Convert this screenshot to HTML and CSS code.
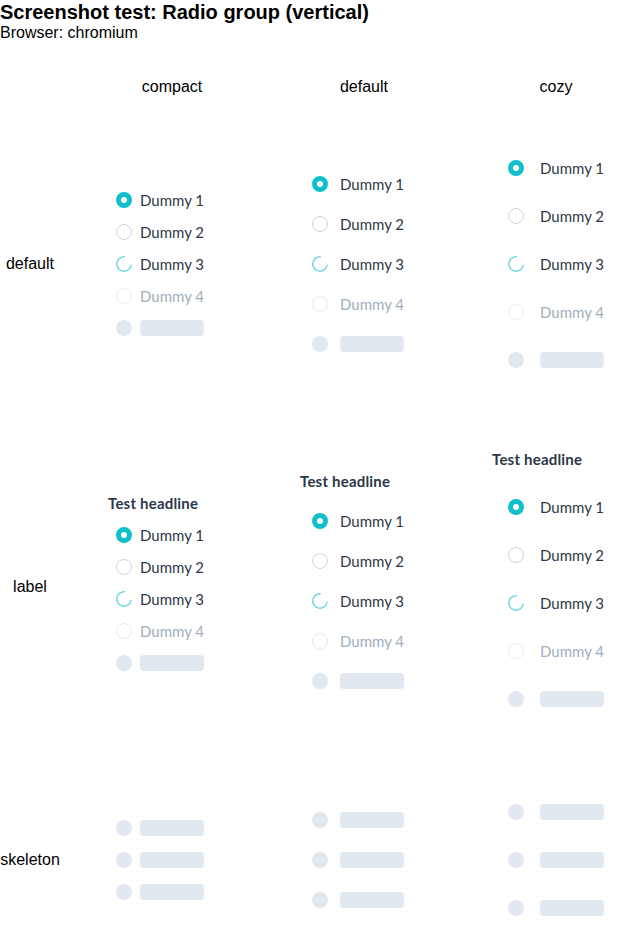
FILE: index.html
```html
<!DOCTYPE html>
<html>
<head>
<meta charset="utf-8">
<link rel="stylesheet" href="styles.css">
</head>
<body>
<h1 class="title">Screenshot test: Radio group (vertical)</h1>
<p class="subtitle">Browser: chromium</p>
<div class="matrix">
  <div class="corner"></div>
  <div class="col-head">compact</div>
  <div class="col-head">default</div>
  <div class="col-head">cozy</div>

  <div class="row-head">default</div>
  <div class="cell"><div class="group compact">
    <div class="item"><span class="radio checked"></span><span class="text">Dummy 1</span></div>
    <div class="item"><span class="radio"></span><span class="text">Dummy 2</span></div>
    <div class="item"><svg class="spinner" viewBox="0 0 16 16"><circle cx="8" cy="8" r="7.25"/></svg><span class="text">Dummy 3</span></div>
    <div class="item disabled"><span class="radio"></span><span class="text">Dummy 4</span></div>
    <div class="item"><span class="skel-dot"></span><span class="skel-bar"></span></div>
  </div></div>
  <div class="cell"><div class="group normal">
    <div class="item"><span class="radio checked"></span><span class="text">Dummy 1</span></div>
    <div class="item"><span class="radio"></span><span class="text">Dummy 2</span></div>
    <div class="item"><svg class="spinner" viewBox="0 0 16 16"><circle cx="8" cy="8" r="7.25"/></svg><span class="text">Dummy 3</span></div>
    <div class="item disabled"><span class="radio"></span><span class="text">Dummy 4</span></div>
    <div class="item"><span class="skel-dot"></span><span class="skel-bar"></span></div>
  </div></div>
  <div class="cell"><div class="group cozy">
    <div class="item"><span class="radio checked"></span><span class="text">Dummy 1</span></div>
    <div class="item"><span class="radio"></span><span class="text">Dummy 2</span></div>
    <div class="item"><svg class="spinner" viewBox="0 0 16 16"><circle cx="8" cy="8" r="7.25"/></svg><span class="text">Dummy 3</span></div>
    <div class="item disabled"><span class="radio"></span><span class="text">Dummy 4</span></div>
    <div class="item"><span class="skel-dot"></span><span class="skel-bar"></span></div>
  </div></div>

  <div class="row-head">label</div>
  <div class="cell"><div class="group compact">
    <div class="headline">Test headline</div>
    <div class="item"><span class="radio checked"></span><span class="text">Dummy 1</span></div>
    <div class="item"><span class="radio"></span><span class="text">Dummy 2</span></div>
    <div class="item"><svg class="spinner" viewBox="0 0 16 16"><circle cx="8" cy="8" r="7.25"/></svg><span class="text">Dummy 3</span></div>
    <div class="item disabled"><span class="radio"></span><span class="text">Dummy 4</span></div>
    <div class="item"><span class="skel-dot"></span><span class="skel-bar"></span></div>
  </div></div>
  <div class="cell"><div class="group normal">
    <div class="headline">Test headline</div>
    <div class="item"><span class="radio checked"></span><span class="text">Dummy 1</span></div>
    <div class="item"><span class="radio"></span><span class="text">Dummy 2</span></div>
    <div class="item"><svg class="spinner" viewBox="0 0 16 16"><circle cx="8" cy="8" r="7.25"/></svg><span class="text">Dummy 3</span></div>
    <div class="item disabled"><span class="radio"></span><span class="text">Dummy 4</span></div>
    <div class="item"><span class="skel-dot"></span><span class="skel-bar"></span></div>
  </div></div>
  <div class="cell"><div class="group cozy">
    <div class="headline">Test headline</div>
    <div class="item"><span class="radio checked"></span><span class="text">Dummy 1</span></div>
    <div class="item"><span class="radio"></span><span class="text">Dummy 2</span></div>
    <div class="item"><svg class="spinner" viewBox="0 0 16 16"><circle cx="8" cy="8" r="7.25"/></svg><span class="text">Dummy 3</span></div>
    <div class="item disabled"><span class="radio"></span><span class="text">Dummy 4</span></div>
    <div class="item"><span class="skel-dot"></span><span class="skel-bar"></span></div>
  </div></div>

  <div class="row-head">skeleton</div>
  <div class="cell"><div class="group compact">
    <div class="item"><span class="skel-dot"></span><span class="skel-bar"></span></div>
    <div class="item"><span class="skel-dot"></span><span class="skel-bar"></span></div>
    <div class="item"><span class="skel-dot"></span><span class="skel-bar"></span></div>
  </div></div>
  <div class="cell"><div class="group normal">
    <div class="item"><span class="skel-dot"></span><span class="skel-bar"></span></div>
    <div class="item"><span class="skel-dot"></span><span class="skel-bar"></span></div>
    <div class="item"><span class="skel-dot"></span><span class="skel-bar"></span></div>
  </div></div>
  <div class="cell"><div class="group cozy">
    <div class="item"><span class="skel-dot"></span><span class="skel-bar"></span></div>
    <div class="item"><span class="skel-dot"></span><span class="skel-bar"></span></div>
    <div class="item"><span class="skel-dot"></span><span class="skel-bar"></span></div>
  </div></div>
</div>
</body>
</html>
```
FILE: styles.css
```css
html, body {
  margin: 0;
  padding: 0;
  background: #ffffff;
}
body {
  font-family: "Liberation Sans", Arial, sans-serif;
  color: #000000;
}
.title {
  margin: 0;
  font-size: 20px;
  line-height: 24px;
  font-weight: bold;
}
.subtitle {
  margin: 0;
  font-size: 16px;
  line-height: 18px;
}
.matrix {
  width: 636px;
  overflow: hidden;
  display: grid;
  grid-template-columns: 76px 192px 192px 192px;
  grid-template-rows: 90px 263px 384px 162px;
  align-items: center;
}
.col-head {
  text-align: center;
  font-size: 16px;
  line-height: 18px;
}
.row-head {
  width: 60px;
  text-align: center;
  font-size: 16px;
  line-height: 18px;
}
.cell {
  display: flex;
  justify-content: center;
}
.group {
  width: 128px;
  display: flex;
  flex-direction: column;
  font-family: Lato, "Noto Sans", sans-serif;
  color: #2d3748;
}
.group.compact { --g: 8px; }
.group.normal { --g: 12px; }
.group.cozy { --g: 16px; }
.headline {
  font-size: 15px;
  font-weight: bold;
  line-height: 16px;
  margin-bottom: var(--g);
  white-space: nowrap;
  letter-spacing: 0.2px;
}
.item {
  display: flex;
  align-items: center;
  padding: var(--g);
  gap: var(--g);
  height: 16px;
}
.text {
  font-size: 15px;
  line-height: 16px;
  white-space: nowrap;
}
.item.disabled .text {
  color: #a0aec0;
}
.radio {
  box-sizing: border-box;
  width: 16px;
  height: 16px;
  flex: none;
  border-radius: 50%;
  border: 1px solid #cbd5e0;
  background: #ffffff;
}
.radio.checked {
  border: 5px solid #0fbfcc;
}
.item.disabled .radio {
  border-color: #e6ebf1;
}
.spinner {
  width: 16px;
  height: 16px;
  flex: none;
  transform: rotate(10deg);
}
.spinner circle {
  fill: none;
  stroke: #6ad6df;
  stroke-width: 1.4;
  stroke-dasharray: 33 13;
  stroke-linecap: round;
}
.skel-dot {
  width: 16px;
  height: 16px;
  flex: none;
  border-radius: 50%;
  background: #e2e8f0;
}
.skel-bar {
  width: 64px;
  height: 16px;
  flex: none;
  border-radius: 4px;
  background: #e2e8f0;
}
```
